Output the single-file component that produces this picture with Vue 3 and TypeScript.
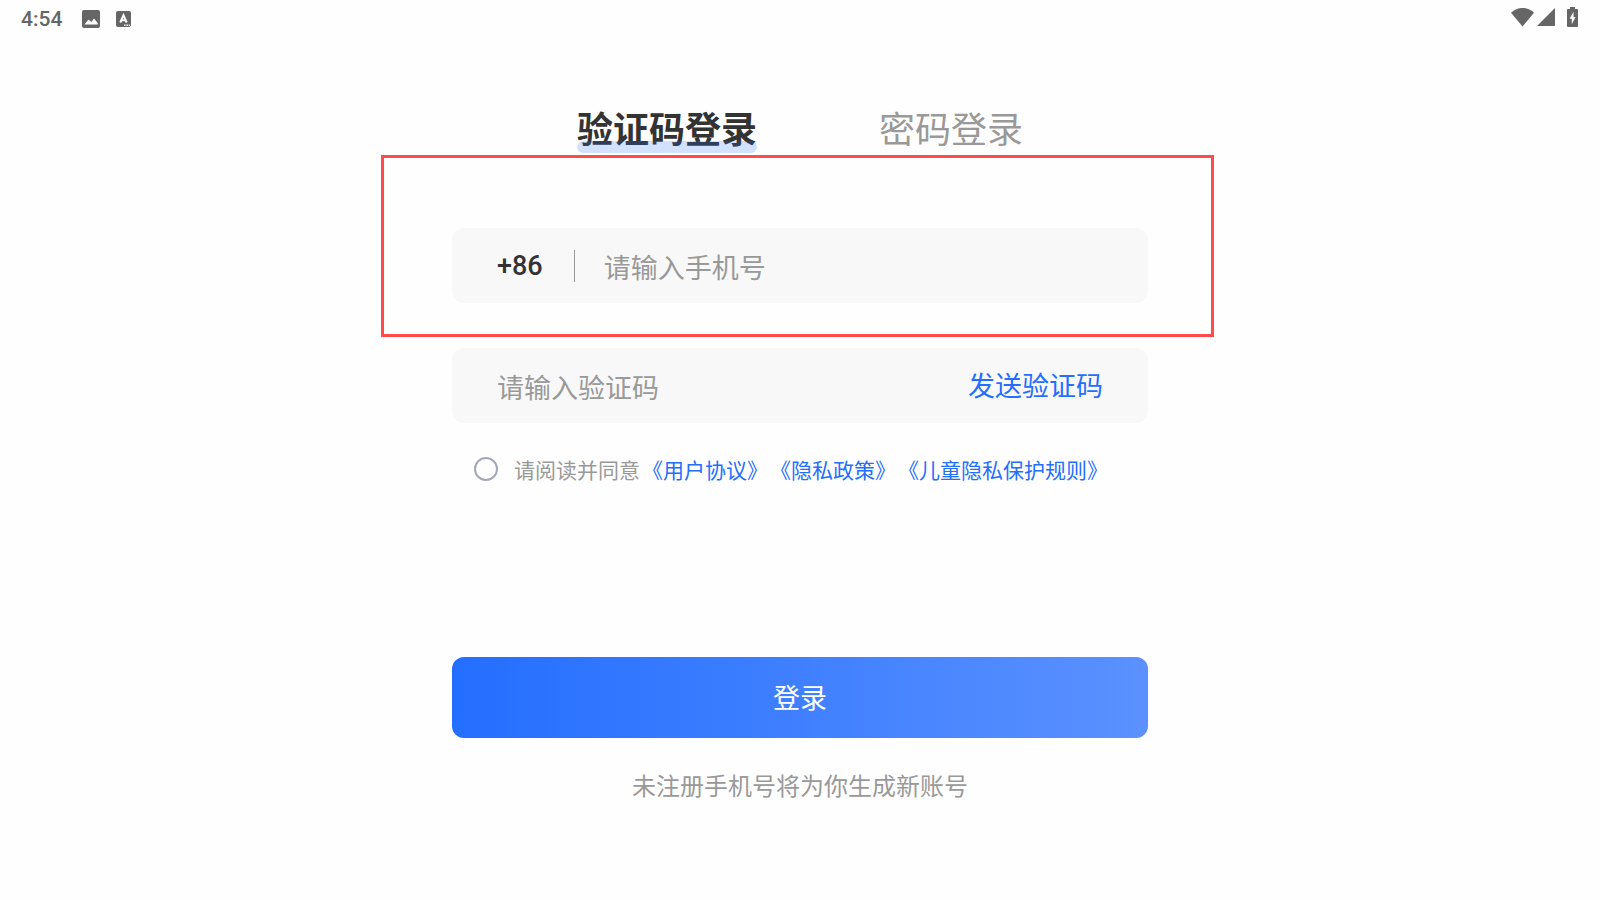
<script setup lang="ts">
import { ref } from 'vue'

type Mode = 'code' | 'password'

const tabs: { id: Mode; label: string }[] = [
  { id: 'code', label: '验证码登录' },
  { id: 'password', label: '密码登录' },
]
const policies: string[] = ['《用户协议》', '《隐私政策》', '《儿童隐私保护规则》']

const mode = ref<Mode>('code')
const phone = ref('')
const code = ref('')
const agreed = ref(false)
</script>

<template>
  <div class="screen">
    <header class="status">
      <div class="status-left">
        <time class="clock">4:54</time>
        <svg class="icon-image" viewBox="0 0 18 18" aria-hidden="true">
          <path
            fill-rule="evenodd"
            d="M2 0h14a2 2 0 0 1 2 2v14a2 2 0 0 1-2 2H2a2 2 0 0 1-2-2V2a2 2 0 0 1 2-2zM2.500 14.500h13.200v-1.500L12 8.500l-2.700 3.400L6.500 9.500z"
          />
        </svg>
        <svg class="icon-input" viewBox="0 0 15 16" aria-hidden="true">
          <rect width="15" height="16" rx="2" />
          <path class="letter-mark" d="M4.300 11.500L7.500 4.200L10.700 11.500M5.500 9.300h4" />
          <path class="dots" d="M8 14.200h1.500M10.400 14.200h1.500M12.700 14.200h1.300" />
        </svg>
      </div>
      <div class="status-right">
        <svg class="icon-wifi" viewBox="0 0 23 19" aria-hidden="true">
          <path d="M11.500 18.500L0 4.800C3.200 1.600 7.200 0 11.500 0S19.800 1.600 23 4.800z" />
        </svg>
        <svg class="icon-signal" viewBox="0 0 18 18" aria-hidden="true">
          <path d="M18 0v18H0z" />
        </svg>
        <svg class="icon-battery" viewBox="0 0 11 20" aria-hidden="true">
          <path
            fill-rule="evenodd"
            d="M3 0h5v2h2a1 1 0 0 1 1 1v16a1 1 0 0 1-1 1H1a1 1 0 0 1-1-1V3a1 1 0 0 1 1-1h2zM6.500 4.800L2.600 11.700H4.800V17.200l3.800-7.200H6.500z"
          />
        </svg>
      </div>
    </header>

    <main class="login">
      <nav class="tabs">
        <button
          v-for="tab in tabs"
          :key="tab.id"
          type="button"
          class="tab"
          :class="{ active: mode === tab.id }"
          @click="mode = tab.id"
        >
          {{ tab.label }}
        </button>
      </nav>

      <form class="form" @submit.prevent>
        <div class="field phone">
          <label class="prefix" for="phone">+86</label>
          <span class="divider"></span>
          <input id="phone" v-model="phone" type="tel" placeholder="请输入手机号" />
          <span class="highlight"></span>
        </div>

        <div class="field">
          <input v-model="code" type="text" placeholder="请输入验证码" aria-label="验证码" />
          <button type="button" class="send">发送验证码</button>
        </div>

        <div class="agreement">
          <input id="agree" v-model="agreed" type="checkbox" />
          <div class="terms">
            <label for="agree">请阅读并同意</label>
            <a v-for="policy in policies" :key="policy" href="#">{{ policy }}</a>
          </div>
        </div>

        <button type="submit" class="submit">登录</button>
        <p class="hint">未注册手机号将为你生成新账号</p>
      </form>
    </main>
  </div>
</template>

<style>
body {
  margin: 0;
  background: #fefefe;
}
</style>

<style scoped>
.screen {
  min-height: 100vh;
  background: #fefefe;
  color: #333;
  font-family: 'Noto Sans CJK SC', sans-serif;
}

.status {
  display: flex;
  justify-content: space-between;
  height: 36px;
  padding: 0 22px 0 21px;
  color: #666;
}

.status-left,
.status-right {
  display: flex;
  align-items: center;
}

.status-left {
  padding-top: 1px;
}

.status-right {
  padding-bottom: 2px;
}

.status svg {
  display: block;
  fill: #666;
}

.clock {
  margin-right: 20px;
  font-family: Roboto, sans-serif;
  font-size: 21px;
  font-weight: 500;
  line-height: 36px;
}

.icon-image {
  width: 18px;
  height: 18px;
  margin-right: 16px;
}

.icon-input {
  width: 15px;
  height: 16px;
}

.status .letter-mark {
  fill: none;
  stroke: #fefefe;
  stroke-width: 2;
}

.status .dots {
  stroke: #fefefe;
  stroke-width: 1.5;
}

.icon-wifi {
  width: 23px;
  height: 19px;
  margin-right: 3px;
}

.icon-signal {
  width: 18px;
  height: 18px;
  margin-right: 12px;
}

.icon-battery {
  width: 11px;
  height: 20px;
}

.login {
  box-sizing: border-box;
  width: 100%;
  max-width: 696px;
  margin: 0 auto;
  padding: 69px 0 40px;
}

.tabs {
  display: flex;
  justify-content: center;
  gap: 122px;
}

button {
  padding: 0;
  border: 0;
  background: none;
  color: inherit;
  font-family: inherit;
  cursor: pointer;
}

.tab {
  position: relative;
  padding-bottom: 4px;
  color: #999;
  font-size: 36px;
  line-height: 44px;
  white-space: nowrap;
}

.tab.active {
  color: #333;
  font-weight: 700;
}

.tab.active::after {
  content: '';
  position: absolute;
  right: 0;
  bottom: 0;
  left: 0;
  height: 12px;
  border-radius: 6px;
  background: rgba(36, 110, 255, 0.2);
}

.form {
  display: flex;
  flex-direction: column;
  margin-top: 75px;
}

.field {
  position: relative;
  display: flex;
  align-items: center;
  height: 75px;
  margin-bottom: 45px;
  padding: 0 45px;
  border-radius: 12px;
  background: #f8f8f8;
  font-size: 27px;
}

.field + .field {
  margin-bottom: 30px;
}

.prefix {
  font-family: Roboto, sans-serif;
  font-weight: 500;
}

.divider {
  width: 1px;
  height: 32px;
  margin: 0 29px 0 31px;
  background: #999;
}

.field input {
  flex: 1;
  min-width: 0;
  height: 48px;
  padding: 2px 0 0;
  border: 0;
  outline: 0;
  background: none;
  color: #333;
  font-family: inherit;
  font-size: 27px;
}

.field input::placeholder {
  color: #999;
  opacity: 1;
}

.highlight {
  position: absolute;
  inset: -73px -66px -34px -71px;
  border: 3px solid #ff4b4b;
  pointer-events: none;
}

.send {
  padding-bottom: 2px;
  color: #246eff;
  font-size: 27px;
}

.agreement {
  display: flex;
  align-items: center;
  gap: 16px;
  padding-left: 22px;
  color: #999;
  font-size: 21px;
  line-height: 32px;
}

.agreement input {
  flex: none;
  appearance: none;
  width: 24px;
  height: 24px;
  margin: 0;
  border: 2px solid #a3a8b7;
  border-radius: 50%;
}

.agreement input:checked {
  background: #246eff;
}

.terms {
  display: flex;
  gap: 2px;
  white-space: nowrap;
}

.terms a {
  color: #246eff;
  text-decoration: none;
}

.submit {
  height: 81px;
  margin-top: 172px;
  padding-bottom: 2px;
  border-radius: 12px;
  background: linear-gradient(90deg, #246eff, #5b91ff);
  color: #fff;
  font-size: 27px;
}

.hint {
  margin: 29px 0 0;
  color: #999;
  font-size: 24px;
  line-height: 36px;
  text-align: center;
}
</style>
